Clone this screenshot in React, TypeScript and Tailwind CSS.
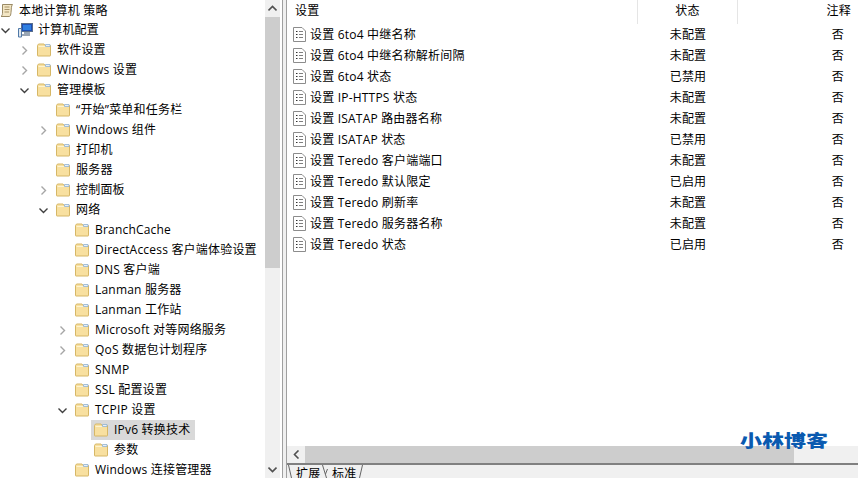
import React from "react"

const FONT = "font-['Open_Sans','Noto_Sans_CJK_SC',sans-serif]"

// level drives the indent, arrow is the tree expander
type TreeRow = { label: string; level: number; arrow?: "open" | "closed"; selected?: boolean }

const TREE: TreeRow[] = [
  { label: "软件设置", level: 2, arrow: "closed" },
  { label: "Windows 设置", level: 2, arrow: "closed" },
  { label: "管理模板", level: 2, arrow: "open" },
  { label: "“开始”菜单和任务栏", level: 3 },
  { label: "Windows 组件", level: 3, arrow: "closed" },
  { label: "打印机", level: 3 },
  { label: "服务器", level: 3 },
  { label: "控制面板", level: 3, arrow: "closed" },
  { label: "网络", level: 3, arrow: "open" },
  { label: "BranchCache", level: 4 },
  { label: "DirectAccess 客户端体验设置", level: 4 },
  { label: "DNS 客户端", level: 4 },
  { label: "Lanman 服务器", level: 4 },
  { label: "Lanman 工作站", level: 4 },
  { label: "Microsoft 对等网络服务", level: 4, arrow: "closed" },
  { label: "QoS 数据包计划程序", level: 4, arrow: "closed" },
  { label: "SNMP", level: 4 },
  { label: "SSL 配置设置", level: 4 },
  { label: "TCPIP 设置", level: 4, arrow: "open" },
  { label: "IPv6 转换技术", level: 5, selected: true },
  { label: "参数", level: 5 },
  { label: "Windows 连接管理器", level: 4 },
]

const POLICIES = [
  ["设置 6to4 中继名称", "未配置"],
  ["设置 6to4 中继名称解析间隔", "未配置"],
  ["设置 6to4 状态", "已禁用"],
  ["设置 IP-HTTPS 状态", "未配置"],
  ["设置 ISATAP 路由器名称", "未配置"],
  ["设置 ISATAP 状态", "已禁用"],
  ["设置 Teredo 客户端端口", "未配置"],
  ["设置 Teredo 默认限定", "已启用"],
  ["设置 Teredo 刷新率", "未配置"],
  ["设置 Teredo 服务器名称", "未配置"],
  ["设置 Teredo 状态", "已启用"],
]

function Folder() {
  return (
    <svg width="15" height="14" viewBox="0 0 15 14" className="shrink-0">
      <path d="M1.5 2.5V12.5a.5.5 0 0 0 .5.5H14a.5.5 0 0 0 .5-.5V2.5H9L8 1H2.5z" fill="#f8e0a0" stroke="#d6b766" />
      <path d="M2.5 3.5H13.5" stroke="#fdf3d0" />
      <path d="M9.5 1.5H14V3.5H9.5z" fill="#e8f0f8" stroke="#8fb0cf" strokeWidth="0.8" />
    </svg>
  )
}

function Arrow({ type }: { type?: "open" | "closed" }) {
  if (!type) return <span className="w-[9px] shrink-0" />
  return (
    <svg width="9" height="9" viewBox="0 0 9 9" className="shrink-0" fill="none" strokeWidth="1.4">
      {type === "open" ? (
        <path d="M0.5 2.5L4.5 6.5L8.5 2.5" stroke="#404040" />
      ) : (
        <path d="M2.5 0.5L6.5 4.5L2.5 8.5" stroke="#a6a6a6" />
      )}
    </svg>
  )
}

function ScrollIcon() {
  return (
    <svg width="14" height="15" viewBox="0 0 14 15" className="shrink-0">
      <path d="M2.5 1.5H12.5C11 3 11.5 6 11 9.5C10.8 11.5 10.5 13 9.5 13.5H1C2.5 12.5 2.5 11 2.5 9z" fill="#f3e6c4" stroke="#9a8a66" />
      <path d="M4.5 4H9.5M4.5 6.5H9.5M4.5 9H9" stroke="#a8946a" />
    </svg>
  )
}

function ComputerIcon() {
  return (
    <svg width="16" height="16" viewBox="0 0 16 16" className="shrink-0">
      <rect x="4.5" y="1.5" width="11" height="8" fill="#1f4fb4" stroke="#5a6f8c" />
      <rect x="6" y="3" width="8" height="5" fill="#2f7fe0" />
      <path d="M7 10H13V12H7z" fill="#9aa7b5" />
      <path d="M1.5 6.5H4.5V15H1.5z" fill="#dfe6ee" stroke="#4f79a8" />
      <path d="M5 13H13" stroke="#6f7f92" strokeWidth="1.4" />
    </svg>
  )
}

function PolicyIcon() {
  return (
    <svg width="13" height="15" viewBox="0 0 13 15" className="shrink-0">
      <path d="M0.5 0.5H9L12.5 4V14.5H0.5z" fill="#ffffff" stroke="#8c8c8c" />
      <path d="M3 4.5H4.5M3 7.5H4.5M3 10.5H4.5" stroke="#303030" />
      <path d="M6 4.5H10M6 7.5H10M6 10.5H10" stroke="#7f7f7f" />
    </svg>
  )
}

function ScrollButton({ d }: { d: string }) {
  return (
    <svg width="9" height="7" viewBox="0 0 9 7" fill="none" stroke="#505050" strokeWidth="1.6">
      <path d={d} />
    </svg>
  )
}

function Tree() {
  return (
    <div className="w-[265px] shrink-0 overflow-hidden">
      <div className="h-5 flex items-center pt-px">
        <ScrollIcon />
        <span className="ml-[5px]">本地计算机 策略</span>
      </div>
      <div className="h-5 flex items-center">
        <span className="ml-px"><Arrow type="open" /></span>
        <span className="ml-[7px]"><ComputerIcon /></span>
        <span className="ml-[5px]">计算机配置</span>
      </div>
      {TREE.map((row) => (
        <div
          key={row.label}
          className={
            row.level === 2
              ? "h-5 flex items-center pl-[20px]"
              : row.level === 3
                ? "h-5 flex items-center pl-[39px]"
                : row.level === 4
                  ? "h-5 flex items-center pl-[58px]"
                  : "h-5 flex items-center pl-[77px]"
          }
        >
          <Arrow type={row.arrow} />
          <div className={row.selected ? "flex items-center h-5 ml-[5px] pl-[2px] pr-[5px] bg-[#d9d9d9]" : "flex items-center h-5 ml-[7px]"}>
            <Folder />
            <span className="ml-[6px] whitespace-nowrap">{row.label}</span>
          </div>
        </div>
      ))}
    </div>
  )
}

function VScroll() {
  return (
    <div className="w-[15px] shrink-0 bg-[#f0f0f0] flex flex-col items-center">
      <div className="h-[17px] flex items-center justify-center shrink-0">
        <ScrollButton d="M0.5 5.5L4.5 1.5L8.5 5.5" />
      </div>
      <div className="w-full h-[251px] bg-[#cdcdcd] shrink-0" />
      <div className="flex-1" />
      <div className="h-[14px] flex items-start justify-center shrink-0 pt-[2px]">
        <ScrollButton d="M0.5 1.5L4.5 5.5L8.5 1.5" />
      </div>
    </div>
  )
}

function PolicyPane() {
  return (
    <div className="flex-1 min-w-0 flex flex-col">
      <div className="h-6 flex shrink-0">
        <div className="w-[351px] pl-[8px] pb-[2px] flex items-center border-r border-[#e5e5e5]">设置</div>
        <div className="w-[100px] pb-[2px] flex items-center justify-center border-r border-[#e5e5e5]">状态</div>
        <div className="flex-1 pb-[2px] pr-[7px] flex items-center justify-end">注释</div>
      </div>
      <div className="flex-1 min-h-0">
        {POLICIES.map(([name, state]) => (
          <div key={name} className="h-[21px] flex items-center">
            <div className="w-[351px] pl-[6px] flex items-center">
              <PolicyIcon />
              <span className="ml-[4px] whitespace-nowrap">{name}</span>
            </div>
            <div className="w-[100px] text-center">{state}</div>
            <div className="flex-1 text-right pr-[14px]">否</div>
          </div>
        ))}
      </div>
      <div className="h-[17px] shrink-0 bg-[#f0f0f0] flex">
        <div className="w-[18px] flex items-center justify-center">
          <svg width="7" height="9" viewBox="0 0 7 9" fill="none" stroke="#505050" strokeWidth="1.6">
            <path d="M5.5 0.5L1.5 4.5L5.5 8.5" />
          </svg>
        </div>
        <div className="w-[489px] bg-[#cdcdcd]" />
      </div>
      <div className="h-[2px] shrink-0 bg-[#808080]" />
      <div className="h-[13px] shrink-0 bg-[#f0f0f0] flex items-start overflow-hidden pl-[1px]">
        <svg width="4" height="13" viewBox="0 0 4 13" fill="none" stroke="#666666" className="shrink-0">
          <path d="M0.5 0L3.5 13" />
        </svg>
        <span className="leading-[18px] w-[30px] pl-[4px] shrink-0">扩展</span>
        <svg width="6" height="13" viewBox="0 0 6 13" fill="none" stroke="#666666" className="shrink-0">
          <path d="M0.5 0L4.5 13M5.5 4L3.5 9" />
        </svg>
        <span className="leading-[18px] w-[31px] pl-[4px] shrink-0">标准</span>
        <svg width="4" height="13" viewBox="0 0 4 13" fill="none" stroke="#666666" className="shrink-0">
          <path d="M3.5 0L0.5 13" />
        </svg>
      </div>
    </div>
  )
}

export default function App() {
  return (
    <div className={`relative w-[858px] h-[478px] overflow-hidden flex bg-white text-[12px] tracking-[0.2px] text-black ${FONT}`}>
      <Tree />
      <VScroll />
      {/* splitter between tree and list */}
      <div className="ml-[2px] w-[5px] shrink-0 bg-[#f0f0f0] border-l border-r border-[#a0a0a0]" />
      <PolicyPane />
      {/* blog watermark */}
      <div className="absolute left-[740px] top-[429px] origin-top scale-y-[0.8] text-[22px] leading-[24px] tracking-normal font-black text-[#0a5ab0] font-['Noto_Sans_CJK_SC',sans-serif]">
        小林博客
      </div>
    </div>
  )
}
